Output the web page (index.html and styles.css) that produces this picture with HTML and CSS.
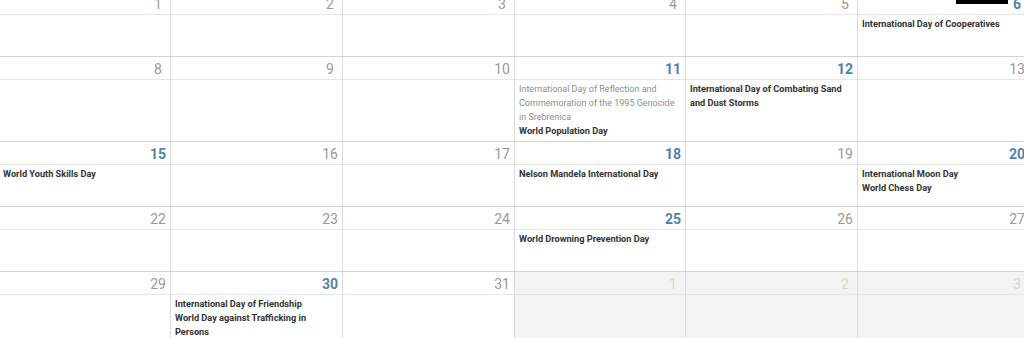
FILE: index.html
```html
<!DOCTYPE html>
<html lang="en">
<head>
<meta charset="utf-8">
<title>Calendar</title>
<link rel="stylesheet" href="styles.css">
</head>
<body>
<div class="month">
  <div class="week">
    <div class="day"><div class="num"><span>1</span></div><div class="events"></div></div>
    <div class="day"><div class="num"><span>2</span></div><div class="events"></div></div>
    <div class="day"><div class="num"><span>3</span></div><div class="events"></div></div>
    <div class="day"><div class="num"><span>4</span></div><div class="events"></div></div>
    <div class="day"><div class="num"><span>5</span></div><div class="events"></div></div>
    <div class="day"><div class="num has"><span>6</span></div><div class="events"><div class="ev">International Day of Cooperatives</div></div></div>
  </div>
  <div class="week">
    <div class="day"><div class="num"><span>8</span></div><div class="events"></div></div>
    <div class="day"><div class="num"><span>9</span></div><div class="events"></div></div>
    <div class="day"><div class="num"><span>10</span></div><div class="events"></div></div>
    <div class="day"><div class="num has"><span>11</span></div><div class="events"><div class="ev muted">International Day of Reflection and Commemoration of the 1995 Genocide in Srebrenica</div><div class="ev">World Population Day</div></div></div>
    <div class="day"><div class="num has"><span>12</span></div><div class="events"><div class="ev">International Day of Combating Sand and Dust Storms</div></div></div>
    <div class="day"><div class="num"><span>13</span></div><div class="events"></div></div>
  </div>
  <div class="week">
    <div class="day"><div class="num has"><span>15</span></div><div class="events"><div class="ev">World Youth Skills Day</div></div></div>
    <div class="day"><div class="num"><span>16</span></div><div class="events"></div></div>
    <div class="day"><div class="num"><span>17</span></div><div class="events"></div></div>
    <div class="day"><div class="num has"><span>18</span></div><div class="events"><div class="ev">Nelson Mandela International Day</div></div></div>
    <div class="day"><div class="num"><span>19</span></div><div class="events"></div></div>
    <div class="day"><div class="num has"><span>20</span></div><div class="events"><div class="ev">International Moon Day</div><div class="ev">World Chess Day</div></div></div>
  </div>
  <div class="week">
    <div class="day"><div class="num"><span>22</span></div><div class="events"></div></div>
    <div class="day"><div class="num"><span>23</span></div><div class="events"></div></div>
    <div class="day"><div class="num"><span>24</span></div><div class="events"></div></div>
    <div class="day"><div class="num has"><span>25</span></div><div class="events"><div class="ev">World Drowning Prevention Day</div></div></div>
    <div class="day"><div class="num"><span>26</span></div><div class="events"></div></div>
    <div class="day"><div class="num"><span>27</span></div><div class="events"></div></div>
  </div>
  <div class="week">
    <div class="day"><div class="num"><span>29</span></div><div class="events"></div></div>
    <div class="day"><div class="num has"><span>30</span></div><div class="events"><div class="ev">International Day of Friendship</div><div class="ev">World Day against Trafficking in Persons</div></div></div>
    <div class="day"><div class="num"><span>31</span></div><div class="events"></div></div>
    <div class="day other"><div class="num"><span>1</span></div><div class="events"></div></div>
    <div class="day other"><div class="num"><span>2</span></div><div class="events"></div></div>
    <div class="day other"><div class="num"><span>3</span></div><div class="events"></div></div>
  </div>
</div>
<div class="topbar"></div>
</body>
</html>
```

FILE: styles.css
```css
html, body {
  margin: 0;
  padding: 0;
  background: #fff;
  overflow: hidden;
}
body {
  width: 1024px;
  height: 338px;
  font-family: Roboto, "Liberation Sans", sans-serif;
  position: relative;
}
.month {
  display: flex;
  flex-direction: column;
  margin-top: -8px;
  margin-left: -1px;
  width: 1031px;
}
.week {
  display: grid;
  grid-template-columns: 172px 172px 172px 171px 172px 172px;
  border-bottom: 1px solid #d4d4d4;
}
.day {
  display: flex;
  flex-direction: column;
  border-right: 1px solid #dcdcdc;
}
.num {
  height: 23px;
  line-height: 24px;
  text-align: right;
  font-size: 14px;
  color: #9a9a9a;
  border-bottom: 1px solid #e6e6e6;
  box-sizing: border-box;
}
.num span {
  display: inline-block;
  width: 24px;
  text-align: center;
}
.num.has {
  color: #5182a9;
  font-weight: 700;
}
.events {
  min-height: 41px;
  padding: 2px 6px 3px 4px;
  box-sizing: border-box;
}
.ev {
  font-size: 9.2px;
  line-height: 14px;
  font-weight: 700;
  color: #333;
}
.ev.muted {
  font-size: 9px;
  font-weight: 400;
  color: #8e8e8e;
}
.other {
  background: #f3f3f3;
}
.other .num {
  color: #d8d8c6;
}
.topbar {
  position: absolute;
  top: 0;
  left: 956px;
  width: 52px;
  height: 4px;
  background: #000;
}
```
